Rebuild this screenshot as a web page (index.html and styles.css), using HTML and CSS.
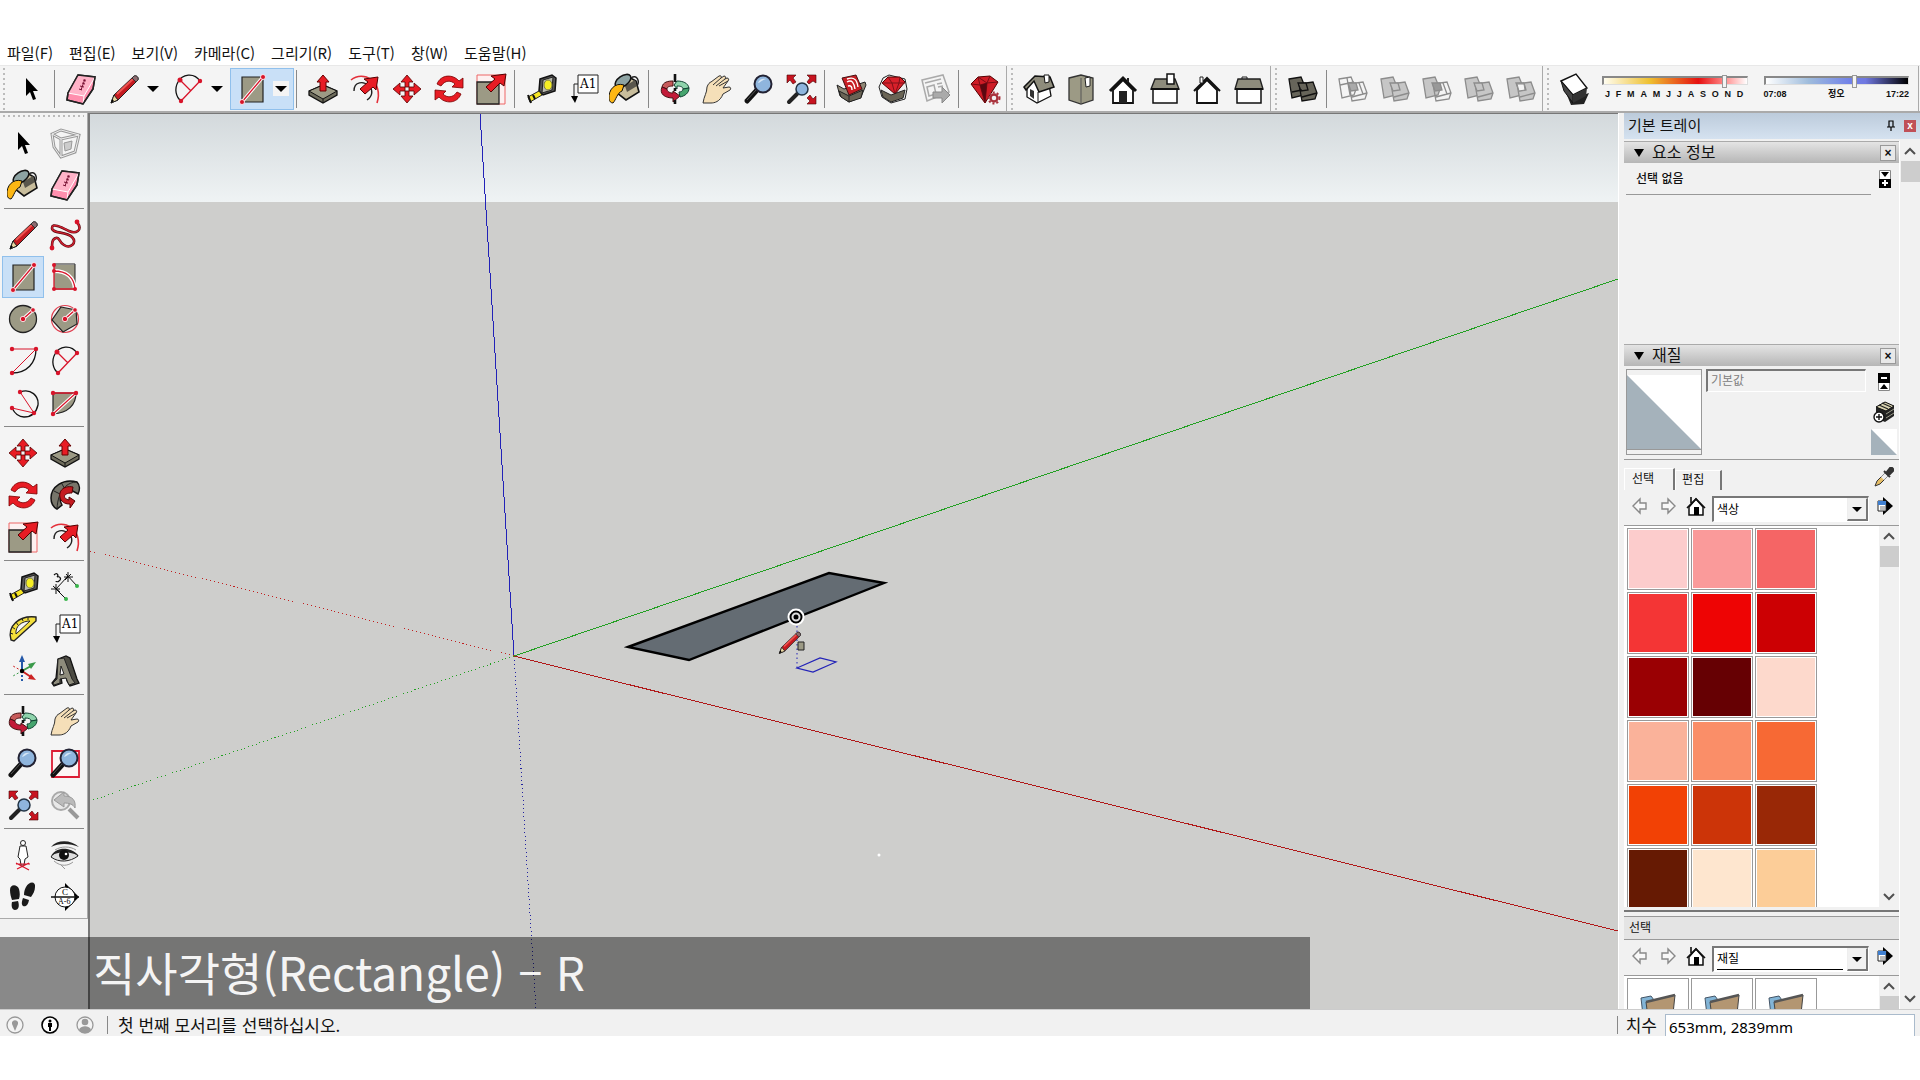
FILE: index.html
```html
<!DOCTYPE html>
<html lang="ko">
<head>
    <meta charset="UTF-8">
    <meta name="viewport" content="width=device-width, initial-scale=1.0">
    <title>SketchUp</title>
    <link rel="stylesheet" href="styles.css">
</head>
<body>
    <svg class="sprite" aria-hidden="true">
        <symbol id="i-select" viewBox="0 0 32 32"><path d="M11 5v18l4-4 3 8 3-1-3-8h5z" fill="#000"/></symbol>
        <symbol id="i-component" viewBox="0 0 32 32"><g fill="none" stroke="#999" stroke-width="3"><path d="M3 7l9-4 18 5-4 17-14 5-7-10zM3 7l9 5 18-4M12 12v18"/></g><g fill="none" stroke="#eee"><path d="M3 7l9-4 18 5-4 17-14 5-7-10zM3 7l9 5 18-4M12 12v18"/></g><path d="M15 16l8-2-1 8-6 2z" fill="#ccc" stroke="#999"/></symbol>
        <symbol id="i-paint" viewBox="0 0 32 32"><path d="M9 9L18 3l9 5 3 11-13 8-9-7z" fill="#c8bd9c" stroke="#111" stroke-width="1.6"/><path d="M16 13l10-6 2 6-10 6z" fill="#59564c"/><ellipse cx="14" cy="8" rx="9" ry="5" transform="rotate(-35 14 8)" fill="#8da3a3" stroke="#111" stroke-width="1.6"/><path d="M15 12C6 9-1 17 0 26c0 2 2 4 4 4 3-3 4-10 9-12z" fill="#fdb714" stroke="#111"/><path d="M22 5c6-4 9 3 6 8" fill="none" stroke="#222" stroke-width="1.5"/></symbol>
        <symbol id="i-eraser" viewBox="0 0 32 32"><path d="M13 2l17 2-2 12-10 15-16-4 1-7z" fill="#ff8fae" stroke="#222" stroke-width="1.5"/><path d="M13 2l17 2-11 19-16-3z" fill="#ffb3c8"/><path d="M3 20l16 3 11-19M19 23l-1 8" fill="none" stroke="#fff"/><path d="M13 2l17 2-2 12-10 15-16-4 1-7z" fill="none" stroke="#222" stroke-width="1.5"/><path d="M20 6l-4 11M18 7l3 1M17 10l3 1M15 13l4 1M14 16l3 1" stroke="#713" /></symbol>
        <symbol id="i-pencil" viewBox="0 0 32 32"><path d="M3 30l3-8L25 4c3-3 7 1 4 4L10 27z" fill="#c41a20" stroke="#222"/><path d="M9 21L26 5" stroke="#ef5350" stroke-width="2"/><path d="M3 30l3-8 4 5z" fill="#e8d5a0" stroke="#222"/><path d="M3 30l1-4 2 2z"/><path d="M24 5l4 4 2-2c1-3-2-5-4-4z" fill="#8c6b70" stroke="#333"/></symbol>
        <symbol id="i-freehand" viewBox="0 0 32 32"><g fill="none"><path id="fh" d="M28 3c7 9-2 12-8 9S3 3 3 9s14 3 20 9-2 12-8 8-4-8-8-7-4 5-4 10" stroke="#5a0a10" stroke-width="2.6"/><path d="M28 3c7 9-2 12-8 9S3 3 3 9s14 3 20 9-2 12-8 8-4-8-8-7-4 5-4 10" stroke="#d32030" stroke-width="1.4"/></g><g fill="#d8142a"><circle cx="28" cy="3" r="2.4"/><circle cx="3" cy="29" r="2.4"/></g></symbol>
        <symbol id="i-rect" viewBox="0 0 32 32"><path d="M6 4h21v25H6z" fill="#9c9a85" stroke="#222" stroke-width="1.2"/><path d="M6 29L27 4" stroke="#fff" stroke-width="3.4"/><path d="M6 29L27 4" stroke="#d8142a" stroke-width="1.3"/><g fill="#d8142a" stroke="#fff" stroke-width=".8"><circle cx="6" cy="29" r="2.5"/><circle cx="27" cy="4" r="2.5"/></g></symbol>
        <symbol id="i-rotrect" viewBox="0 0 32 32"><path d="M5 4h21v25H5z" fill="#9c9a85"/><path d="M5 3h21v25" fill="none" stroke="#222"/><path d="M5 10c12 0 20 6 21 18" fill="none" stroke="#fff" stroke-width="4"/><path d="M26 28H5V4M5 10c12 0 20 6 21 18" fill="none" stroke="#d8142a" stroke-width="1.3"/><g fill="#d8142a"><circle cx="5" cy="4" r="2"/><circle cx="5" cy="10" r="2"/><circle cx="5" cy="28" r="2"/><circle cx="26" cy="28" r="2"/></g></symbol>
        <symbol id="i-circle" viewBox="0 0 32 32"><circle cx="16" cy="16" r="13.5" fill="#9c9a85" stroke="#222" stroke-width="1.3"/><path d="M16 16l10-9" stroke="#fff" stroke-width="3.4"/><path d="M16 16l10-9" stroke="#d8142a" stroke-width="1.4"/><g fill="#d8142a" stroke="#fff" stroke-width=".8"><circle cx="16" cy="16" r="2.7"/><circle cx="26" cy="7" r="2.3"/></g></symbol>
        <symbol id="i-polygon" viewBox="0 0 32 32"><circle cx="16" cy="16" r="13.5" fill="none" stroke="#e04050" stroke-width="1.2"/><path d="M12 4l15 3 1 14-14 8L3 17z" fill="#9c9a85" stroke="#222" stroke-width="1.2"/><path d="M16 16l10-9" stroke="#fff" stroke-width="3.4"/><path d="M16 16l10-9" stroke="#d8142a" stroke-width="1.4"/><g fill="#d8142a" stroke="#fff" stroke-width=".8"><circle cx="16" cy="16" r="2.7"/><circle cx="26" cy="7" r="2.3"/></g></symbol>
        <symbol id="i-arc" viewBox="0 0 32 32"><path d="M29 4C29 18 20 28 5 28" fill="none" stroke="#111" stroke-width="1.3"/><path d="M5 4h24L5 28" fill="none" stroke="#d8142a"/><g fill="#d8142a"><circle cx="5" cy="4" r="2.2"/><circle cx="29" cy="4" r="2.2"/><circle cx="5" cy="28" r="2.2"/></g></symbol>
        <symbol id="i-arc2" viewBox="0 0 32 32"><path d="M28 8C22-1 10 1 6 9c-4 7-2 15 3 19" fill="none" stroke="#111" stroke-width="1.3"/><path d="M9 28L28 8M8 7l11 11" fill="none" stroke="#d8142a" stroke-width="1.3"/><g fill="#d8142a"><circle cx="8" cy="7" r="2.5"/><circle cx="28" cy="8" r="2.2"/><circle cx="9" cy="28" r="2.2"/></g></symbol>
        <symbol id="i-arc3" viewBox="0 0 32 32"><path d="M13 5c11-4 19 4 18 13-2 9-8 12-14 12-5 0-9-3-12-9" fill="none" stroke="#111" stroke-width="1.3"/><path d="M13 5l14 21L5 21" fill="none" stroke="#d8142a"/><g fill="#d8142a"><circle cx="13" cy="5" r="2.2"/><circle cx="27" cy="26" r="2.2"/><circle cx="5" cy="21" r="2.2"/></g></symbol>
        <symbol id="i-pie" viewBox="0 0 32 32"><path d="M4 6h23c0 12-8 20-23 21z" fill="#9c9a85" stroke="#222" stroke-width="1.2"/><path d="M4 27L27 6" stroke="#fff" stroke-width="3.4"/><path d="M4 27L27 6H4" fill="none" stroke="#d8142a" stroke-width="1.3"/><g fill="#d8142a"><circle cx="4" cy="6" r="2.2"/><circle cx="27" cy="6" r="2.2"/><circle cx="4" cy="27" r="2.2"/></g></symbol>
        <symbol id="i-move" viewBox="0 0 32 32"><g fill="#e81c24" stroke="#500" stroke-width=".8"><path id="mv" d="M16 2l6 7h-4v5h-4V9h-4z"/><use href="#mv" transform="rotate(90 16 16)"/><use href="#mv" transform="rotate(180 16 16)"/><use href="#mv" transform="rotate(270 16 16)"/></g></symbol>
        <symbol id="i-push" viewBox="0 0 32 32"><path d="M2 18l14-6 14 6v4L16 30 2 22z" fill="#6e6c5c" stroke="#111" stroke-width="1.3"/><path d="M2 18l14-6 14 6-14 8z" fill="#9c9a85" stroke="#111"/><path d="M16 26v4" stroke="#111"/><path d="M16 2l6 7h-3v9h-6V9h-3z" fill="#e81c24" stroke="#600"/></symbol>
        <symbol id="i-rotate" viewBox="0 0 32 32"><g fill="#e81c24" stroke="#700" stroke-width=".8"><path id="rt" d="M4 11C8 1 20 1 26 8l4-3v10l-11-1 3-3C18 7 12 7 8 13z"/><use href="#rt" transform="rotate(180 16 16)"/></g></symbol>
        <symbol id="i-follow" viewBox="0 0 32 32"><path d="M28 3C14-1 2 8 2 19c0 5 2 9 6 11l5-4c-4-7-1-14 9-15l7 4c2-4 2-9-1-12z" fill="#77756a" stroke="#111" stroke-width="1.5"/><path d="M28 3c-9 0-19 7-20 27M13 5l4 7M5 12l6 3" fill="none" stroke="#222"/><path d="M24 8c-10-2-16 5-12 13 3 4 7 4 9 4v4l5-7-6-4v3c-6-1-7-7 3-7z" fill="#c41a20" stroke="#500"/></symbol>
        <symbol id="i-scale" viewBox="0 0 32 32"><path d="M2 2h28v29H2z" fill="#fdf0f0" stroke="#e66"/><path d="M2 9h22v22H2z" fill="#9c9a85" stroke="#222" stroke-width="1.3"/><path d="M31 1l-2 12-4-3-9 9-5-5 9-8-4-3z" fill="#e81c24" stroke="#500"/></symbol>
        <symbol id="i-offset" viewBox="0 0 32 32"><path d="M2 7C14-3 35 8 28 30" fill="none" stroke="#e4303a" stroke-width="1.6"/><path d="M5 18c0-10 10-10 15-5 4 4 4 10-2 14" fill="none" stroke="#222" stroke-width="1.4"/><path d="M29 4l-2 13-3-3-8 7-5-5 8-7-4-3z" fill="#e81c24" stroke="#500"/></symbol>
        <symbol id="i-tape" viewBox="0 0 32 32"><path d="M15 6l12-4 4 3-1 13-12 4-4-4z" fill="#555" stroke="#111" stroke-width="1.5"/><path d="M18 7l10-3-1 13-10 3z" fill="#b9b9b0" stroke="#222"/><ellipse cx="23" cy="12" rx="4" ry="5" fill="#f6ee24" stroke="#774"/><path d="M14 18l3 4L5 29l-2-5z" fill="#f6e522" stroke="#222"/><path d="M3 22l3 8M8 22l2 4" stroke="#111" stroke-width="2"/></symbol>
        <symbol id="i-dimension" viewBox="0 0 32 32"><path d="M7 18L19 5M5 16l12 12M17 3l11 12M2 18h9M15 6h9M7 13v10M19 1v10M4 15l7 6M16 9l6-6" stroke="#111"/><path d="M5 4c3-3 5 0 3 2 3-1 5 2 2 4-1 1-3 1-3 0" fill="none" stroke="#111" stroke-width="1.2"/><g fill="#38b54a"><circle cx="17" cy="28" r="2"/><circle cx="28" cy="15" r="2"/></g></symbol>
        <symbol id="i-protractor" viewBox="0 0 32 32"><path d="M4 27C0 13 12 2 29 4v4L7 28z" fill="#f3df3b" stroke="#222" stroke-width="1.4"/><path d="M9 21C8 13 15 8 23 8z" fill="#f5f5f5" stroke="#222"/><path d="M3 20l3 1M5 14l3 2M9 9l2 3M15 5l1 3M21 4v3" stroke="#222"/></symbol>
        <symbol id="i-text" viewBox="0 0 32 32"><path d="M11 2h20v18H11z" fill="#fff" stroke="#222"/><text x="13" y="15" font-size="12" font-family="DejaVu Serif">A1</text><path d="M11 11H7v14" fill="none" stroke="#222"/><path d="M4 23h7l-3 7z"/></symbol>
        <symbol id="i-axes" viewBox="0 0 32 32"><path d="M15 16V5" stroke="#2458a8" stroke-width="2"/><path d="M15 0l3 7h-6z" fill="#2458a8"/><path d="M15 16l9-5" stroke="#3a9a4a" stroke-width="2"/><path d="M29 7l-5 7-3-5z" fill="#3a9a4a"/><path d="M15 16l9 6" stroke="#c22" stroke-width="2"/><path d="M29 25l-8-1 3-5z" fill="#c22"/><path d="M15 16v12" stroke="#2458a8" stroke-dasharray="2 2" stroke-width="2"/><path d="M15 16L6 11" stroke="#c22" stroke-dasharray="2 2"/><path d="M15 16l-9 5" stroke="#3a9a4a" stroke-dasharray="2 2"/><circle cx="15" cy="16" r="2.2"/></symbol>
        <symbol id="i-text3d" viewBox="0 0 32 32"><path d="M9 4l8-3 4 2 7 21 2 4-9 3-3-5-1-4-5 1 1 5-8 3-2-3 4-5z" fill="#4c4b43" stroke="#111" stroke-width="1.3"/><path d="M9 4l6-1 8 21 3 4-6 2-3-7-6 1v4l-6 2-1-2 4-4z" fill="#8e8c7c" stroke="#222"/><path d="M12 11l3 8-4 1z" fill="#f1f1f1" stroke="#222"/></symbol>
        <symbol id="i-orbit" viewBox="0 0 32 32"><path d="M3 14c1-5 6-6 11-6v5c-4 0-6 1-6 3z" fill="#c75b5b" stroke="#411"/><path d="M3 14c-3 7 3 11 11 11v4l7-6-7-5v2c-4 0-6-2-6-4z" fill="#c21a38" stroke="#411"/><path d="M18 8l-3 4 3 4v-3c4 0 6 1 6 3l6-1c-1-5-6-7-12-7z" fill="#8ed3ab" stroke="#143"/><path d="M30 15c0 5-4 8-9 9l-1-5c2 0 4-1 4-3z" fill="#46a56e" stroke="#143"/><path d="M16 1v8M16 15v3M16 27v4" stroke="#111" stroke-width="2.6"/></symbol>
        <symbol id="i-pan" viewBox="0 0 32 32"><path d="M2 30C3 23 6 20 6 14c1-3 3-5 4-5l8-6c2-1 3 1 2 2l3-2c2 0 2 2 1 3l2-1c2 0 2 2 1 3l-5 7 6-1c2 0 2 2 1 3l-7 4c-3 8-9 9-12 9z" fill="#f5dfb8" stroke="#333"/><path d="M12 12l8-7M15 13l9-7M18 13l9-5" stroke="#333"/></symbol>
        <symbol id="i-zoom" viewBox="0 0 32 32"><path d="M14 17L4 28" stroke="#111" stroke-width="5" stroke-linecap="round"/><path d="M13 17L4 27" stroke="#555" stroke-width="1"/><circle cx="20" cy="11" r="8.5" fill="#8fb5dd" stroke="#223" stroke-width="2"/><path d="M15 10c1-4 5-5 8-4-4 1-6 4-8 4z" fill="#d5e5f5"/></symbol>
        <symbol id="i-zoomwin" viewBox="0 0 32 32"><path d="M3 4h27v26H3z" fill="#fdf5f5" stroke="#dc1c34" stroke-width="1.8"/><use href="#i-zoom" width="32" height="32"/></symbol>
        <symbol id="i-extents" viewBox="0 0 32 32"><path d="M12 21l-8 8" stroke="#222" stroke-width="4" stroke-linecap="round"/><circle cx="17" cy="16" r="6" fill="#8fb5dd" stroke="#234" stroke-width="1.5"/><g fill="#c81420" stroke="#400" stroke-width=".6"><path d="M2 2h9l-3 3 3 4-3 2-3-4-3 3z"/><path d="M31 2v8l-3-2-4 3-2-2 3-4-3-3z"/><path d="M31 31h-9l3-3-3-3 3-3 3 4 3-3z"/></g></symbol>
        <symbol id="i-prev" viewBox="0 0 32 32"><circle cx="12" cy="12" r="9" fill="#e8e8e8" stroke="#aaa" stroke-width="2"/><path d="M5 11l10-8v4c9 0 12 5 11 12-2-4-6-5-11-5v4z" fill="#bbb" stroke="#999"/><path d="M20 20l9 9" stroke="#999" stroke-width="4"/></symbol>
        <symbol id="i-camera" viewBox="0 0 32 32"><circle cx="16" cy="4" r="2.5" fill="#fff" stroke="#222"/><path d="M13 7h6l2 11-3 2-1 6h-3l-1-6-2-2z" fill="#fff" stroke="#222"/><path d="M9 24l13 7M22 24l-12 6M9 25h14" stroke="#d8142a" stroke-width="1.2"/></symbol>
        <symbol id="i-eye" viewBox="0 0 32 32"><path d="M2 8C9 0 22 1 30 8 21 4 9 4 2 8z" fill="#222"/><path d="M2 18C9 8 21 9 29 17c-8 6-19 7-27 1z" fill="#ddd" stroke="#222"/><path d="M2 17C8 7 22 8 30 17 21 12 9 12 2 17z" fill="#222"/><circle cx="15" cy="16" r="5" fill="#111"/><circle cx="17" cy="15" r="1.3" fill="#fff"/><path d="M5 22c7 6 14 5 19 1M12 26l4 4M6 11c6-4 15-4 21 0" fill="none" stroke="#999"/></symbol>
        <symbol id="i-walk" viewBox="0 0 32 32"><g fill="#1a1a1a"><path d="M3 9c0-6 7-6 9-1 1 4 1 7 0 10l-7 1C4 16 3 13 3 9zM5 21l6-1c2 6 0 9-3 9s-4-4-3-8z"/><path d="M19 6c3-6 10-6 9 0 0 4-2 7-4 10l-7-2c0-4 1-6 2-8zM16 17l6 2c-1 6-4 7-6 6-2-2-1-5 0-8z"/></g></symbol>
        <symbol id="i-section" viewBox="0 0 32 32"><path d="M16 2l14 14-14 14z"/><circle cx="16" cy="16" r="10" fill="#fff" stroke="#111"/><path d="M2 16h28" stroke="#111" stroke-width="1.5"/><text x="13" y="14" font-size="9" font-family="Liberation Serif">C</text><text x="9" y="23" font-size="8" font-family="Liberation Serif">A-6</text></symbol>
        <symbol id="i-warehouse" viewBox="0 0 32 32"><path d="M2 12l7 4 21-7 1 3-5 12-12 5-9-6z" fill="#8e8776" stroke="#222"/><path d="M7 5l14-3 6 14-13 6z" fill="#c81e24" stroke="#411"/><path d="M12 9c5-3 7 1 8 7M13 13c3-1 4 1 4 4M12 6c8-3 10 2 11 8" fill="none" stroke="#fff" stroke-width="1.4"/><path d="M4 18l10 5 14-6-2 8-12 4-8-5z" fill="#6a6455" stroke="#222"/><path d="M14 23v6" stroke="#222"/></symbol>
        <symbol id="i-extwh" viewBox="0 0 32 32"><path d="M6 5l6-3 16 4 2 10-2 10-14 4-9-6-3-10z" fill="#eee" stroke="#222"/><path d="M5 10l6-6h12l5 5-10 12z" fill="#d8202a" stroke="#500"/><path d="M5 10h23M11 4l4 6 3 11 4-11 1-6" fill="none" stroke="#801018"/><path d="M4 17l10 5 14-5-2 8-12 4-8-5z" fill="#6a6455" stroke="#222"/></symbol>
        <symbol id="i-layout" viewBox="0 0 32 32"><path d="M3 7l21-5 6 17-22 9z" fill="#f4f4f4" stroke="#aaa" stroke-width="1.5"/><path d="M6 10l16-4M8 14l7-2 2 9-7 2zM18 11l5-1M19 14l5-1" fill="none" stroke="#aaa" stroke-width="1.5"/><path d="M14 19h9v-5l8 8-8 8v-5h-9z" fill="#aaa" stroke="#888"/></symbol>
        <symbol id="i-gem" viewBox="0 0 32 32"><path d="M2 11l7-7 12-1 8 6-13 21z" fill="#cf1c26" stroke="#500"/><path d="M2 11l9 1 7-2 11-1M9 4l2 8 5 18 2-20 3-7M9 4l9 6" fill="none" stroke="#7a0c14"/><path d="M11 12l7-2-2 20z" fill="#5a0810"/><circle cx="25" cy="25" r="3.5" fill="#eee" stroke="#a8303a" stroke-width="2.4"/><circle cx="25" cy="25" r="5.5" fill="none" stroke="#a8303a" stroke-width="2" stroke-dasharray="2 2"/></symbol>
        <symbol id="i-iso" viewBox="0 0 32 32"><path d="M4 14l8-8 14 6 2 11-14 7-10-6z" fill="#fff" stroke="#111" stroke-width="1.3"/><path d="M1 14L12 3l15 1 4 10-15 5-5-11-8 9z" fill="#8e8c7c" stroke="#111" stroke-width="1.5"/><path d="M21 2h5v7l-4 1z" fill="#fff" stroke="#111"/><path d="M7 16l4 2v8l-4-3z" fill="#333"/><path d="M15 19v11" stroke="#111"/></symbol>
        <symbol id="i-top" viewBox="0 0 32 32"><path d="M4 5l12-3 12 3v22l-12 4-12-4z" fill="#9c9a85" stroke="#333" stroke-width="1.3"/><path d="M16 5v26" stroke="#555"/><path d="M20 5l5-1v9l-4 1z" fill="#fff" stroke="#222"/></symbol>
        <symbol id="i-front" viewBox="0 0 32 32"><path d="M6 17l10-10 10 10v13H6z" fill="#fff" stroke="#111" stroke-width="1.8"/><path d="M3 18L16 5l13 13" fill="none" stroke="#111" stroke-width="3"/><path d="M12 18h8v12h-8z" fill="#222"/><path d="M21 5v4" stroke="#222" stroke-width="2"/></symbol>
        <symbol id="i-right" viewBox="0 0 32 32"><path d="M4 16h24v14H4z" fill="#fff" stroke="#111" stroke-width="1.5"/><path d="M6 6h20l4 10H2z" fill="#8e8c7c" stroke="#222" stroke-width="1.4"/><path d="M18 1h7v10h-7z" fill="#fff" stroke="#111" stroke-width="1.5"/><path d="M2 16h28" stroke="#111" stroke-width="2"/></symbol>
        <symbol id="i-back" viewBox="0 0 32 32"><path d="M6 17l10-10 10 10v13H6z" fill="#fff" stroke="#111" stroke-width="1.8"/><path d="M3 18L16 5l13 13" fill="none" stroke="#111" stroke-width="2"/><path d="M9 4h3v6h-3z" fill="#fff" stroke="#222"/></symbol>
        <symbol id="i-left" viewBox="0 0 32 32"><path d="M9 4h5v3H9z" fill="#eee" stroke="#222"/><path d="M4 16h24v14H4z" fill="#fff" stroke="#111" stroke-width="1.5"/><path d="M5 6h22l3 10H2z" fill="#8e8c7c" stroke="#222" stroke-width="1.4"/><path d="M2 16h28" stroke="#111" stroke-width="2"/></symbol>
        <symbol id="i-shell" viewBox="0 0 32 32"><g fill="#67655a" stroke="#111" stroke-width="1.3"><path d="M2 6l12-2 5 12-2 6-12 3z"/><path d="M12 11l14-2 4 11-2 6-13 2z"/><path d="M15 24l15-4M5 19l10-2M11 10h8l2 7-7 1z"/></g></symbol>
        <symbol id="i-solid" viewBox="0 0 32 32"><g fill="#c6c6c6" stroke="#8c8c8c" stroke-width="1.3"><path d="M2 6l12-2 5 12-2 6-12 3z"/><path d="M12 11l14-2 4 11-2 6-13 2z"/><path d="M15 24l15-4M11 10h8l2 7-7 1z"/></g></symbol>
        <symbol id="i-solidline" viewBox="0 0 32 32"><g fill="none" stroke="#8c8c8c" stroke-width="1.3"><path d="M2 6l12-2 5 12-2 6-12 3z"/><path d="M12 11l14-2 4 11-2 6-13 2zM15 24l15-4M3 12l14-3M10 5l3 17M22 10l4 11"/><path d="M11 10h8l2 7-7 1z" fill="#aaa"/></g></symbol>
        <symbol id="i-subtract" viewBox="0 0 32 32"><g stroke="#8c8c8c" stroke-width="1.3"><path d="M2 6l12-2 5 12-2 6-12 3z" fill="#c6c6c6"/><path d="M12 11l14-2 4 11-2 6-13 2zM15 24l15-4M22 10l4 11" fill="none"/><path d="M11 10h8l2 7-7 1z" fill="#999"/></g></symbol>
        <symbol id="i-split" viewBox="0 0 32 32"><use href="#i-solid" width="32" height="32"/><path d="M12 11h7l1 6-6 1z" fill="#f4f4f4" stroke="#8c8c8c"/></symbol>
        <symbol id="i-shadow" viewBox="0 0 32 32"><path d="M3 10l9 16 18-6-5 11-13 1z" fill="#222"/><path d="M2 8l15-7 11 14-14 7z" fill="#fff" stroke="#111" stroke-width="1.4"/><path d="M2 8l3 10 9 12V22z" fill="#444" stroke="#111"/><path d="M14 22l14-7-1 8-13 7z" fill="#333"/></symbol>
        <symbol id="i-navback" viewBox="0 0 20 20"><path d="M3 10l7-7v4h6v6h-6v4z" fill="#f8f8f8" stroke="#888" stroke-width="1.4"/></symbol>
        <symbol id="i-navnext" viewBox="0 0 20 20"><path d="M17 10l-7-7v4H4v6h6v4z" fill="#f8f8f8" stroke="#888" stroke-width="1.4"/></symbol>
        <symbol id="i-home" viewBox="0 0 20 20"><path d="M3 11v8h14v-8l-7-8z" fill="#fff" stroke="#111" stroke-width="1.5"/><path d="M1 12l9-9 9 9M5 1v6" fill="none" stroke="#111" stroke-width="1.6"/><path d="M8 11h5v8H8z"/></symbol>
        <symbol id="i-detail" viewBox="0 0 20 20"><path d="M8 7V1l10 9-10 9z"/><path d="M3 5h8v10H3z" fill="#fff" stroke="#222"/><path d="M3 5h8v4H3z" fill="#3f7fd0"/><path d="M5 11h5M5 13h5" stroke="#777"/></symbol>
        <symbol id="i-dropper" viewBox="0 0 20 20"><path d="M1 19l2-5 8-8 3 3-8 8z" fill="#e6bd65" stroke="#333"/><path d="M7 10l4-4 3 3-4 4z" fill="#eee"/><path d="M10 4l6 6M12 6l4-5c2-1 4 1 3 3l-4 4z" fill="#333" stroke="#333" stroke-width="2"/></symbol>
        <symbol id="i-newmat" viewBox="0 0 22 22"><path d="M3 6l9-5 9 4v10l-9 6-9-4z" fill="#222"/><path d="M3 6l9-5 9 4-8 5z" fill="#d9d3b0" stroke="#111"/><path d="M6 4l9 4M9 2l9 4" stroke="#222" stroke-width="1.3"/><path d="M13 13l8-5M13 17l8-5" stroke="#998" stroke-width="1"/><circle cx="6" cy="16" r="5" fill="#fff" stroke="#111" stroke-width="1.4"/><path d="M3 16h6M6 13v6" stroke="#111" stroke-width="1.4"/></symbol>
        <symbol id="i-folder" viewBox="0 0 40 40"><path d="M3 5l10-2 3 4v33H7z" fill="#82b4d6" stroke="#456"/><path d="M8 9l29-7-4 38H12z" fill="#b39672" stroke="#444"/><path d="M8 9l29-7" stroke="#555" stroke-width="2.5"/></symbol>
        <symbol id="i-up" viewBox="0 0 12 12"><path d="M1 9l5-5 5 5" fill="none" stroke="#505050" stroke-width="2"/></symbol>
        <symbol id="i-down" viewBox="0 0 12 12"><path d="M1 3l5 5 5-5" fill="none" stroke="#505050" stroke-width="2"/></symbol>
    </svg>

    <div class="app">
        <nav class="menu-bar">
            <a href="#">파일(F)</a>
            <a href="#">편집(E)</a>
            <a href="#">보기(V)</a>
            <a href="#">카메라(C)</a>
            <a href="#">그리기(R)</a>
            <a href="#">도구(T)</a>
            <a href="#">창(W)</a>
            <a href="#">도움말(H)</a>
        </nav>

        <header class="toolbar">
            <div class="group">
                <span class="grip"></span>
                <button class="tool" aria-label="선택"><svg><use href="#i-select"/></svg></button>
                <span class="sep"></span>
                <button class="tool" aria-label="지우개"><svg><use href="#i-eraser"/></svg></button>
                <div class="combo">
                    <button class="tool" aria-label="선"><svg><use href="#i-pencil"/></svg></button>
                    <button class="drop" aria-label="선 도구 더 보기"></button>
                </div>
                <div class="combo">
                    <button class="tool" aria-label="호"><svg><use href="#i-arc2"/></svg></button>
                    <button class="drop" aria-label="호 도구 더 보기"></button>
                </div>
                <div class="combo active">
                    <button class="tool" aria-label="직사각형"><svg><use href="#i-rect"/></svg></button>
                    <button class="drop" aria-label="도형 더 보기"></button>
                </div>
                <span class="sep"></span>
                <button class="tool" aria-label="밀기/끌기"><svg><use href="#i-push"/></svg></button>
                <button class="tool" aria-label="오프셋"><svg><use href="#i-offset"/></svg></button>
                <button class="tool" aria-label="이동"><svg><use href="#i-move"/></svg></button>
                <button class="tool" aria-label="회전"><svg><use href="#i-rotate"/></svg></button>
                <button class="tool" aria-label="배율"><svg><use href="#i-scale"/></svg></button>
                <span class="sep"></span>
                <button class="tool" aria-label="줄자"><svg><use href="#i-tape"/></svg></button>
                <button class="tool" aria-label="텍스트"><svg><use href="#i-text"/></svg></button>
                <button class="tool" aria-label="페인트"><svg><use href="#i-paint"/></svg></button>
                <span class="sep"></span>
                <button class="tool" aria-label="궤도"><svg><use href="#i-orbit"/></svg></button>
                <button class="tool" aria-label="화면 이동"><svg><use href="#i-pan"/></svg></button>
                <button class="tool" aria-label="확대/축소"><svg><use href="#i-zoom"/></svg></button>
                <button class="tool" aria-label="전체 보기"><svg><use href="#i-extents"/></svg></button>
                <span class="sep"></span>
                <button class="tool" aria-label="3D Warehouse"><svg><use href="#i-warehouse"/></svg></button>
                <button class="tool" aria-label="Extension Warehouse"><svg><use href="#i-extwh"/></svg></button>
                <button class="tool" aria-label="LayOut"><svg><use href="#i-layout"/></svg></button>
                <span class="sep"></span>
                <button class="tool" aria-label="확장 프로그램 관리자"><svg><use href="#i-gem"/></svg></button>
            </div>
            <div class="group">
                <span class="grip"></span>
                <button class="tool" aria-label="등각"><svg><use href="#i-iso"/></svg></button>
                <button class="tool" aria-label="평면"><svg><use href="#i-top"/></svg></button>
                <button class="tool" aria-label="정면"><svg><use href="#i-front"/></svg></button>
                <button class="tool" aria-label="우측"><svg><use href="#i-right"/></svg></button>
                <button class="tool" aria-label="뒷면"><svg><use href="#i-back"/></svg></button>
                <button class="tool" aria-label="좌측"><svg><use href="#i-left"/></svg></button>
            </div>
            <div class="group">
                <span class="grip"></span>
                <button class="tool" aria-label="외부 쉘"><svg><use href="#i-shell"/></svg></button>
                <span class="sep"></span>
                <button class="tool" aria-label="교차"><svg><use href="#i-solidline"/></svg></button>
                <button class="tool" aria-label="결합"><svg><use href="#i-solid"/></svg></button>
                <button class="tool" aria-label="빼기"><svg><use href="#i-subtract"/></svg></button>
                <button class="tool" aria-label="자르기"><svg><use href="#i-solid"/></svg></button>
                <button class="tool" aria-label="분할"><svg><use href="#i-split"/></svg></button>
            </div>
            <div class="group shadows">
                <span class="grip"></span>
                <button class="tool" aria-label="그림자"><svg><use href="#i-shadow"/></svg></button>
                <div class="slider">
                    <input type="range" class="month" aria-label="날짜" min="0" max="100" value="86">
                    <div class="marks"><span>J</span><span>F</span><span>M</span><span>A</span><span>M</span><span>J</span><span>J</span><span>A</span><span>S</span><span>O</span><span>N</span><span>D</span></div>
                </div>
                <div class="slider">
                    <input type="range" class="time" aria-label="시간" min="0" max="100" value="63">
                    <div class="marks times"><span>07:08</span><span>정오</span><span>17:22</span></div>
                </div>
            </div>
        </header>

        <div class="workspace">
            <aside class="side">
                <div class="side-tools">
                    <span class="side-grip"></span>
                    <div class="tools">
                        <button class="tool" aria-label="선택"><svg><use href="#i-select"/></svg></button>
                        <button class="tool" aria-label="구성 요소"><svg><use href="#i-component"/></svg></button>
                        <button class="tool" aria-label="페인트"><svg><use href="#i-paint"/></svg></button>
                        <button class="tool" aria-label="지우개"><svg><use href="#i-eraser"/></svg></button>
                    </div>
                    <div class="tools">
                        <button class="tool" aria-label="선"><svg><use href="#i-pencil"/></svg></button>
                        <button class="tool" aria-label="자유 곡선"><svg><use href="#i-freehand"/></svg></button>
                        <button class="tool active" aria-label="직사각형"><svg><use href="#i-rect"/></svg></button>
                        <button class="tool" aria-label="회전된 직사각형"><svg><use href="#i-rotrect"/></svg></button>
                        <button class="tool" aria-label="원"><svg><use href="#i-circle"/></svg></button>
                        <button class="tool" aria-label="다각형"><svg><use href="#i-polygon"/></svg></button>
                        <button class="tool" aria-label="호"><svg><use href="#i-arc"/></svg></button>
                        <button class="tool" aria-label="2점 호"><svg><use href="#i-arc2"/></svg></button>
                        <button class="tool" aria-label="3점 호"><svg><use href="#i-arc3"/></svg></button>
                        <button class="tool" aria-label="파이"><svg><use href="#i-pie"/></svg></button>
                    </div>
                    <div class="tools">
                        <button class="tool" aria-label="이동"><svg><use href="#i-move"/></svg></button>
                        <button class="tool" aria-label="밀기/끌기"><svg><use href="#i-push"/></svg></button>
                        <button class="tool" aria-label="회전"><svg><use href="#i-rotate"/></svg></button>
                        <button class="tool" aria-label="따라가기"><svg><use href="#i-follow"/></svg></button>
                        <button class="tool" aria-label="배율"><svg><use href="#i-scale"/></svg></button>
                        <button class="tool" aria-label="오프셋"><svg><use href="#i-offset"/></svg></button>
                    </div>
                    <div class="tools">
                        <button class="tool" aria-label="줄자"><svg><use href="#i-tape"/></svg></button>
                        <button class="tool" aria-label="치수"><svg><use href="#i-dimension"/></svg></button>
                        <button class="tool" aria-label="각도기"><svg><use href="#i-protractor"/></svg></button>
                        <button class="tool" aria-label="텍스트"><svg><use href="#i-text"/></svg></button>
                        <button class="tool" aria-label="축"><svg><use href="#i-axes"/></svg></button>
                        <button class="tool" aria-label="3D 텍스트"><svg><use href="#i-text3d"/></svg></button>
                    </div>
                    <div class="tools">
                        <button class="tool" aria-label="궤도"><svg><use href="#i-orbit"/></svg></button>
                        <button class="tool" aria-label="화면 이동"><svg><use href="#i-pan"/></svg></button>
                        <button class="tool" aria-label="확대/축소"><svg><use href="#i-zoom"/></svg></button>
                        <button class="tool" aria-label="창 확대"><svg><use href="#i-zoomwin"/></svg></button>
                        <button class="tool" aria-label="전체 보기"><svg><use href="#i-extents"/></svg></button>
                        <button class="tool" aria-label="이전"><svg><use href="#i-prev"/></svg></button>
                    </div>
                    <div class="tools">
                        <button class="tool" aria-label="카메라 배치"><svg><use href="#i-camera"/></svg></button>
                        <button class="tool" aria-label="둘러보기"><svg><use href="#i-eye"/></svg></button>
                        <button class="tool" aria-label="걷기"><svg><use href="#i-walk"/></svg></button>
                        <button class="tool" aria-label="단면"><svg><use href="#i-section"/></svg></button>
                    </div>
                </div>
            </aside>

            <main class="viewport">
                <svg viewBox="90 114 1528 895" preserveAspectRatio="xMinYMin slice">
                    <defs>
                        <linearGradient id="sky" x1="0" y1="0" x2="0" y2="1">
                            <stop offset="0" stop-color="#d3d9dc"/>
                            <stop offset="1" stop-color="#eff3f4"/>
                        </linearGradient>
                    </defs>
                    <rect x="90" y="114" width="1528" height="88" fill="url(#sky)"/>
                    <g fill="none" stroke-width="1" shape-rendering="crispEdges">
                        <path d="M480 114l34 542" stroke="#2222b8"/>
                        <path d="M514 656l22 353" stroke="#2222a0" stroke-dasharray="1 3"/>
                        <path d="M514 656l1104-377" stroke="#22a022"/>
                        <path d="M514 656L90 801" stroke="#22a022" stroke-dasharray="1 3"/>
                        <path d="M514 656l1104 275" stroke="#b01818"/>
                        <path d="M514 656L90 551" stroke="#c02020" stroke-dasharray="1 3"/>
                    </g>
                    <path d="M628 647l201-74 55 10-195 77z" fill="#646c73" stroke="#000" stroke-width="2.4"/>
                    <circle cx="796" cy="617" r="7" fill="#ddd" stroke="#fff" stroke-width="3"/>
                    <circle cx="796" cy="617" r="5.5" fill="#ddd" stroke="#000" stroke-width="2"/>
                    <circle cx="796" cy="617" r="2.5"/>
                    <path d="M797 626v42" stroke="#2222b8" stroke-dasharray="1.5 3"/>
                    <path d="M797 668l23-10 16 4-23 10z" fill="none" stroke="#2222b8" stroke-width="1.2"/>
                    <use href="#i-pencil" x="777" y="630" width="25" height="25"/>
                    <path d="M798 642h6v8h-6z" fill="#9c9a85" stroke="#222"/>
                    <circle cx="879" cy="855" r="1.5" fill="#fff"/>
                </svg>
            </main>

            <aside class="tray">
                <div class="tray-title">
                    <span>기본 트레이</span>
                    <button class="pin" aria-label="고정"><svg viewBox="0 0 10 12"><path d="M3 1h4v6H3zM1 7h8M5 7v4M7 1v6" fill="none" stroke="#000" stroke-width="1.2"/></svg></button>
                    <button class="tray-close" aria-label="닫기">x</button>
                </div>
                <div class="tray-body">
                    <div class="panels">
                        <section class="entity">
                            <h2 class="panel-head"><i></i><span>요소 정보</span><button aria-label="닫기">×</button></h2>
                            <div class="entity-row">
                                <p>선택 없음</p>
                                <button class="expand" aria-label="세부 정보"><svg viewBox="0 0 12 18"><path d="M.5.5h11v17H.5z" fill="#fff" stroke="#888"/><path d="M2 2h8L6 7z"/><path d="M0 9h12v9H0z"/><path d="M3 13h6M6 10v6" stroke="#fff" stroke-width="2"/></svg></button>
                            </div>
                        </section>
                        <section class="material">
                            <h2 class="panel-head"><i></i><span>재질</span><button aria-label="닫기">×</button></h2>
                            <div class="current">
                                <div class="preview"><svg viewBox="0 0 74 74" preserveAspectRatio="none"><path d="M0 0h74v74H0z" fill="#fff"/><path d="M0 0v74h74z" fill="#a5b2bb"/></svg></div>
                                <input type="text" aria-label="재질 이름" value="기본값" disabled>
                                <div class="current-tools">
                                    <button aria-label="보조 창"><svg class="i-collapse" viewBox="0 0 12 18"><path d="M.5.5h11v17H.5z" fill="#fff" stroke="#888"/><path d="M0 0h12v10H0z"/><path d="M3 4h6v2H3z" fill="#fff"/><path d="M2 16h8l-4-5z"/></svg></button>
                                    <button aria-label="재질 만들기"><svg class="i-new"><use href="#i-newmat"/></svg></button>
                                    <button aria-label="기본 재질"><svg class="i-default" viewBox="0 0 26 26"><path d="M0 0h26v26H0z" fill="#fff"/><path d="M0 0v26h26z" fill="#a5b2bb"/></svg></button>
                                </div>
                            </div>
                            <div class="tabs">
                                <button class="tab on">선택</button>
                                <button class="tab">편집</button>
                                <button class="dropper" aria-label="샘플"><svg><use href="#i-dropper"/></svg></button>
                            </div>
                            <div class="browse">
                                <button aria-label="뒤로"><svg><use href="#i-navback"/></svg></button>
                                <button aria-label="앞으로"><svg><use href="#i-navnext"/></svg></button>
                                <button aria-label="모델 내"><svg><use href="#i-home"/></svg></button>
                                <div class="select-box"><select aria-label="재질 모음"><option>색상</option></select><i></i></div>
                                <button aria-label="세부 정보"><svg><use href="#i-detail"/></svg></button>
                            </div>
                            <div class="list swatch-list">
                                <div class="swatches">
                                    <button class="swatch c1" aria-label="색상 A01"></button>
                                    <button class="swatch c2" aria-label="색상 A02"></button>
                                    <button class="swatch c3" aria-label="색상 A03"></button>
                                    <button class="swatch c4" aria-label="색상 A04"></button>
                                    <button class="swatch c5" aria-label="색상 A05"></button>
                                    <button class="swatch c6" aria-label="색상 A06"></button>
                                    <button class="swatch c7" aria-label="색상 A07"></button>
                                    <button class="swatch c8" aria-label="색상 A08"></button>
                                    <button class="swatch c9" aria-label="색상 B01"></button>
                                    <button class="swatch c10" aria-label="색상 B02"></button>
                                    <button class="swatch c11" aria-label="색상 B03"></button>
                                    <button class="swatch c12" aria-label="색상 B04"></button>
                                    <button class="swatch c13" aria-label="색상 B05"></button>
                                    <button class="swatch c14" aria-label="색상 B06"></button>
                                    <button class="swatch c15" aria-label="색상 B07"></button>
                                    <button class="swatch c16" aria-label="색상 B08"></button>
                                    <button class="swatch c17" aria-label="색상 C01"></button>
                                    <button class="swatch c18" aria-label="색상 C02"></button>
                                </div>
                                <div class="scroll"><svg><use href="#i-up"/></svg><span class="thumb"></span><svg><use href="#i-down"/></svg></div>
                            </div>
                        </section>
                        <section class="secondary">
                            <h3>선택</h3>
                            <div class="browse">
                                <button aria-label="뒤로"><svg><use href="#i-navback"/></svg></button>
                                <button aria-label="앞으로"><svg><use href="#i-navnext"/></svg></button>
                                <button aria-label="모델 내"><svg><use href="#i-home"/></svg></button>
                                <div class="select-box"><select class="underlined" aria-label="재질 폴더"><option>재질</option></select><i></i></div>
                                <button aria-label="세부 정보"><svg><use href="#i-detail"/></svg></button>
                            </div>
                            <div class="list folder-list">
                                <div class="swatches">
                                    <button class="swatch" aria-label="폴더 1"><svg><use href="#i-folder"/></svg></button>
                                    <button class="swatch" aria-label="폴더 2"><svg><use href="#i-folder"/></svg></button>
                                    <button class="swatch" aria-label="폴더 3"><svg><use href="#i-folder"/></svg></button>
                                </div>
                                <div class="scroll"><svg><use href="#i-up"/></svg><span class="thumb"></span></div>
                            </div>
                        </section>
                    </div>
                    <div class="scroll tray-scroll"><svg><use href="#i-up"/></svg><span class="thumb"></span><svg><use href="#i-down"/></svg></div>
                </div>
            </aside>
            <div class="caption">직사각형(Rectangle) – R</div>
        </div>

        <footer class="status">
            <svg viewBox="0 0 18 18"><circle cx="9" cy="9" r="8" fill="#f4f4f4" stroke="#999" stroke-width="1.3"/><path d="M9 15L6 8c-1-5 7-5 6 0z" fill="#999"/></svg>
            <svg viewBox="0 0 18 18"><circle cx="9" cy="9" r="8" fill="#fff" stroke="#000" stroke-width="1.6"/><circle cx="9" cy="5" r="1.5"/><path d="M7 7h4v4h-1v4H8v-4H7z"/></svg>
            <svg viewBox="0 0 18 18"><circle cx="9" cy="9" r="8" fill="#f4f4f4" stroke="#999" stroke-width="1.3"/><circle cx="9" cy="6" r="3.3" fill="#999"/><path d="M3 14c1-5 11-5 12 0-3 4-9 4-12 0z" fill="#999"/></svg>
            <p>첫 번째 모서리를 선택하십시오.</p>
            <label for="measure">치수</label>
            <input type="text" id="measure" value="653mm, 2839mm">
        </footer>
    </div>
</body>
</html>
```
FILE: styles.css
```css
* {
    box-sizing: border-box;
}
body {
    margin: 0;
    background: #fff;
    color: #111;
    font-family: 'Noto Sans CJK KR', sans-serif;
    font-size: 15px;
}
button {
    padding: 0;
    border: none;
    background: none;
    font-family: inherit;
    color: inherit;
}
button svg {
    display: block;
}
h2, h3, p {
    margin: 0;
    font-weight: normal;
}
.sprite {
    display: none;
}
.app {
    display: flex;
    flex-direction: column;
    height: 100vh;
    padding: 40px 0 44px;
}

/* menu */
.menu-bar {
    display: flex;
    gap: 16px;
    height: 25px;
    padding-left: 7px;
    line-height: 26px;
}
.menu-bar a {
    color: #111;
    text-decoration: none;
}

/* top toolbar */
.toolbar {
    display: flex;
    height: 48px;
    background: #f4f4f4;
    border-top: 1px solid #e8e8e8;
    border-bottom: 2px solid #aaa;
}
.group {
    display: flex;
    align-items: center;
    border-right: 1px solid #aaa;
}
.grip {
    width: 2px;
    height: 42px;
    margin: 0 5px 0 4px;
    background: repeating-linear-gradient(#bbb 0 2px, transparent 2px 5px);
}
.group:first-child .grip {
    margin-left: 3px;
}
.sep {
    width: 1px;
    height: 38px;
    margin: 0 5px 0 2px;
    background: #888;
}
.tool {
    display: flex;
    justify-content: center;
    align-items: center;
    width: 42px;
    height: 42px;
}
.tool svg {
    width: 32px;
    height: 32px;
}
.combo {
    display: flex;
    align-items: center;
    width: 64px;
    height: 42px;
    border: 1px solid transparent;
}
.combo.active,
.tool.active {
    background: #c9e0f7;
    border: 1px solid #90c0ec;
}
.drop {
    width: 16px;
    height: 15px;
}
.drop::before {
    content: '';
    display: block;
    width: 0;
    margin: 0 auto;
    border: 6px solid transparent;
    border-top-color: #000;
    border-bottom: none;
}
.active .drop {
    background: #f4f4f4;
}
.shadows {
    flex: 1;
    margin-right: 1px;
    padding-right: 9px;
}
.slider {
    flex: 1;
    margin-left: 6px;
}
.slider + .slider {
    margin-left: 16px;
}
.slider input {
    appearance: none;
    display: block;
    width: 100%;
    height: 9px;
    margin: 0 0 2px;
    border: 1px solid #ddd;
    border-top: 2px solid #888;
    border-left: 2px solid #888;
}
.slider input::-webkit-slider-thumb {
    appearance: none;
    width: 5px;
    height: 13px;
    background: #f4f4f4;
    border: 1px solid #999;
}
.month {
    background: linear-gradient(90deg, #fffdf0, #eec030 32%, #e61010 66%, #f88 84%, #fff);
}
.time {
    background: linear-gradient(90deg, #fff, #9fbcdc 30%, #7080e8 60%, #7078e0 70%, #000);
}
.marks {
    display: flex;
    justify-content: space-between;
    padding: 0 4px 0 3px;
    font: bold 9px/14px 'Liberation Sans', 'Noto Sans CJK KR', sans-serif;
}
.marks.times {
    padding: 0;
}

/* workspace */
.workspace {
    position: relative;
    flex: 1;
    display: flex;
    min-height: 0;
    background: #f1f1f1;
}
.side {
    width: 90px;
    border-right: 2px solid #777;
}
.side-tools {
    padding: 2px 2px 0;
    border-right: 1px solid #aaa;
    border-bottom: 1px solid #aaa;
    background: #f4f4f4;
}
.side-grip {
    display: block;
    height: 2px;
    margin: 0 1px 5px;
    background: repeating-linear-gradient(90deg, #bbb 0 2px, transparent 2px 5px);
}
.tools {
    display: grid;
    grid-template-columns: 42px 42px;
}
.tools + .tools::before {
    content: '';
    grid-column: 1 / 3;
    height: 1px;
    margin: 2px 2px 5px;
    background: #888;
}
.viewport {
    flex: 1;
    min-width: 0;
    border-top: 1px solid #777;
    background: #cececc;
}
.viewport svg {
    display: block;
    width: 100%;
    height: 100%;
}
.caption {
    position: absolute;
    left: 0;
    bottom: 0;
    width: 1310px;
    height: 72px;
    padding-left: 93px;
    background: rgba(0, 0, 0, 0.43);
    color: #f4f4f4;
    font-size: 46px;
    line-height: 68px;
}

/* tray */
.tray {
    display: flex;
    flex-direction: column;
    width: 302px;
    padding-left: 5px;
    border-left: 1px solid #fff;
}
.tray-title {
    display: flex;
    align-items: center;
    height: 26px;
    padding: 0 4px 0 4px;
    background: linear-gradient(#bccbdb, #d5e2f0);
}
.tray-title span {
    flex: 1;
    padding-bottom: 3px;
}
.pin svg {
    width: 10px;
    height: 12px;
}
.tray-close {
    width: 12px;
    height: 12px;
    margin-left: 8px;
    background: #c05058;
    color: #fff;
    font: bold 10px/10px 'Liberation Sans', sans-serif;
}
.tray-body {
    flex: 1;
    display: flex;
    min-height: 0;
    padding-top: 2px;
}
.panels {
    flex: 1;
    display: flex;
    flex-direction: column;
    min-width: 0;
    border-right: 1px solid #fff;
}
.entity {
    height: 203px;
}
.panel-head {
    display: flex;
    align-items: center;
    height: 22px;
    padding: 0 3px 0 10px;
    background: linear-gradient(#e4e4e4, #b6b6b6);
    border-top: 1px solid #aaa;
    font-size: 16px;
}
.panel-head i {
    border: 5px solid transparent;
    border-top: 8px solid #000;
    border-bottom: none;
    margin-right: 8px;
}
.panel-head span {
    flex: 1;
    padding-bottom: 4px;
    line-height: 18px;
}
.panel-head button {
    width: 16px;
    height: 16px;
    border: 1px solid #999;
    background: #e8e8e8;
    font: bold 12px/12px 'Liberation Sans', sans-serif;
}
.entity-row {
    display: flex;
    align-items: center;
    height: 31px;
    margin-right: 8px;
    padding-left: 12px;
}
.entity-row p {
    flex: 1;
    padding-bottom: 2px;
    font-size: 12px;
    font-weight: 500;
}
.entity-row svg, .i-collapse {
    width: 12px;
    height: 18px;
}
.entity::after {
    content: '';
    display: block;
    height: 1px;
    margin: 0 28px 0 2px;
    background: #999;
}
.material {
    flex: 1;
    display: flex;
    flex-direction: column;
    min-height: 0;
}
.current {
    display: flex;
    align-items: flex-start;
    height: 94px;
    padding: 3px 2px 0;
    border-bottom: 1px solid #999;
}
.preview {
    width: 76px;
    height: 86px;
    padding: 5px 0;
    border: 1px solid #999;
}
.preview svg {
    display: block;
    width: 74px;
    height: 75px;
    border-bottom: 1px solid #999;
}
.current input {
    flex: 1;
    min-width: 0;
    height: 23px;
    margin: 0 0 0 4px;
    padding: 0 3px 3px;
    border: 1px solid #fff;
    border-top: 2px solid #777;
    border-left: 2px solid #777;
    background: #f1f1f1;
    color: #808080;
    font: 12px 'Noto Sans CJK KR', sans-serif;
}
.current-tools {
    display: flex;
    flex-direction: column;
    align-items: center;
    justify-content: space-between;
    width: 26px;
    height: 86px;
    margin-left: 5px;
    padding-top: 4px;
}
.i-new {
    width: 22px;
    height: 22px;
    margin-top: 4px;
}
.i-default {
    width: 26px;
    height: 26px;
}
.tabs {
    display: flex;
    align-items: flex-end;
    height: 30px;
    font-size: 12px;
}
.tab {
    height: 20px;
    padding: 0 16px 4px 6px;
    border-top: 1px solid #fff;
    border-left: 1px solid #fff;
    border-right: 2px solid #777;
    font-size: 12px;
    line-height: 15px;
}
.tab.on {
    height: 22px;
    padding: 0 19px 5px 7px;
}
.dropper {
    margin: 0 5px 3px auto;
}
.dropper svg {
    width: 20px;
    height: 20px;
}
.browse {
    display: flex;
    align-items: center;
    height: 36px;
    padding: 0 4px 3px 6px;
    border-bottom: 1px solid #999;
}
.browse > button {
    margin-right: 8px;
}
.browse > button:last-child {
    margin: 0 0 0 6px;
}
.browse svg {
    width: 20px;
    height: 20px;
}
.browse > button:nth-child(3) {
    margin-right: 6px;
}
.select-box {
    flex: 1;
    display: flex;
    height: 26px;
    margin-top: 6px;
    border: 1px solid #fff;
    border-top: 2px solid #777;
    border-left: 2px solid #777;
    background: #fff;
}
.select-box select {
    appearance: none;
    flex: 1;
    min-width: 0;
    margin: 0 4px 0 3px;
    padding: 0 0 2px;
    border: none;
    background: none;
    font: 12px 'Noto Sans CJK KR', sans-serif;
}
.select-box .underlined {
    margin-bottom: 1px;
    border-bottom: 1px solid #000;
}
.select-box i {
    display: flex;
    align-items: center;
    justify-content: center;
    width: 21px;
    border: 1px solid #eee;
    border-right: 2px solid #777;
    border-bottom: 2px solid #777;
    background: #f1f1f1;
}
.select-box i::before {
    content: '';
    border: 5px solid transparent;
    border-top-color: #000;
    border-bottom: none;
}
.list {
    display: flex;
    justify-content: space-between;
    min-height: 0;
    overflow: hidden;
    background: #fff;
}
.swatch-list {
    flex: 1;
}
.swatches {
    display: grid;
    grid-template-columns: 62px 62px 62px;
    grid-auto-rows: 62px;
    gap: 2px;
    padding: 2px 3px;
}
.swatch {
    border: 1px solid #999;
    padding: 1px;
    background-clip: content-box;
}
.swatch svg {
    width: 40px;
    height: 40px;
    margin: 0 auto;
}
.c1 { background-color: #fccccc; }
.c2 { background-color: #fa9a9a; }
.c3 { background-color: #f56565; }
.c4 { background-color: #f43535; }
.c5 { background-color: #ee0404; }
.c6 { background-color: #cc0003; }
.c7 { background-color: #9a0003; }
.c8 { background-color: #660003; }
.c9 { background-color: #fdd9cc; }
.c10 { background-color: #fab29a; }
.c11 { background-color: #fa8e68; }
.c12 { background-color: #f76934; }
.c13 { background-color: #f24105; }
.c14 { background-color: #cc3408; }
.c15 { background-color: #992806; }
.c16 { background-color: #661a03; }
.c17 { background-color: #fee6cf; }
.c18 { background-color: #fccd98; }
.scroll {
    display: flex;
    flex-direction: column;
    align-items: center;
    width: 20px;
    background: #f1f1f1;
}
.scroll svg {
    flex: none;
    width: 12px;
    height: 12px;
    margin: 4px 0;
}
.scroll svg:last-child {
    margin-top: auto;
}
.thumb {
    flex: none;
    width: 19px;
    height: 21px;
    background: #cdcdcd;
}
.secondary {
    height: 99px;
    margin-top: 3px;
    padding-top: 4px;
    border-top: 2px solid #777;
}
.secondary h3 {
    height: 24px;
    padding-left: 5px;
    border-top: 1px solid #999;
    border-bottom: 1px solid #999;
    background: #e4e4e4;
    font-size: 12px;
    line-height: 20px;
}
.folder-list {
    height: 33px;
}
.folder-list .swatches {
    grid-auto-rows: 58px;
}
.folder-list .swatch {
    padding-top: 12px;
}

/* status bar */
.status {
    display: flex;
    align-items: center;
    height: 27px;
    padding: 4px 5px 0 6px;
    border-top: 1px solid #ccc;
    background: #f1f1f1;
    font-size: 17px;
    line-height: 24px;
}
.status svg {
    width: 18px;
    height: 18px;
    margin-right: 17px;
}
.status svg:nth-child(3) {
    margin-right: 13px;
}
.status p {
    flex: 1;
    padding-left: 10px;
    border-left: 1px solid #888;
    line-height: 18px;
}
.status label {
    padding: 0 8px;
    border-left: 1px solid #888;
    line-height: 18px;
}
.status input {
    width: 250px;
    height: 22px;
    padding: 3px 3px 0;
    border: 1px solid #abc;
    border-bottom: none;
    background: #fff;
    font: 15px 'Noto Sans', sans-serif;
}
```
